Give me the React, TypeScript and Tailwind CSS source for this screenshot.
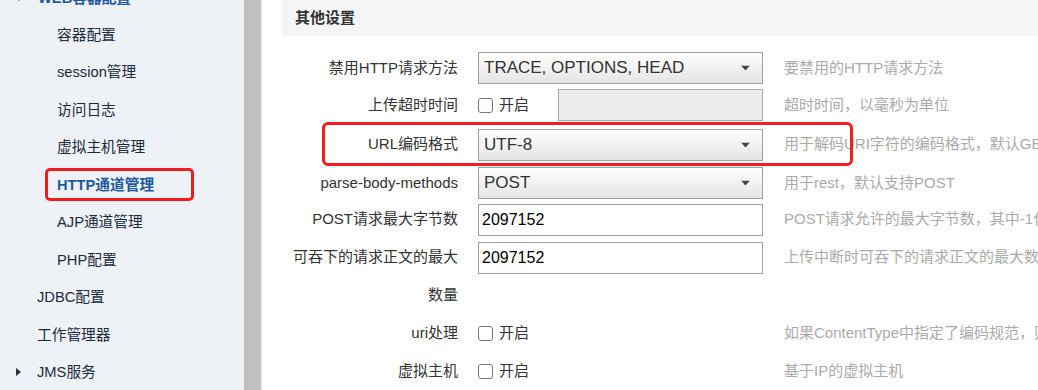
const FONT = { fontFamily: '"Liberation Sans", Arial, "Noto Sans CJK SC", sans-serif' };

type Row = {
  label: string;
  help: string;
  kind: 'select' | 'input' | 'check' | 'checkInput';
  value?: string;
  h: string;
  tall?: boolean;
};

const rows: Row[] = [
  { label: '禁用HTTP请求方法', kind: 'select', value: 'TRACE, OPTIONS, HEAD', help: '要禁用的HTTP请求方法', h: 'h-[36px]' },
  { label: '上传超时时间', kind: 'checkInput', help: '超时时间，以毫秒为单位', h: 'h-[38px]' },
  { label: 'URL编码格式', kind: 'select', value: 'UTF-8', help: '用于解码URI字符的编码格式，默认GBK', h: 'h-[41px]' },
  { label: 'parse-body-methods', kind: 'select', value: 'POST', help: '用于rest，默认支持POST', h: 'h-[36px]' },
  { label: 'POST请求最大字节数', kind: 'input', value: '2097152', help: 'POST请求允许的最大字节数，其中-1代表不限制', h: 'h-[37px]' },
  { label: '可吞下的请求正文的最大数量', kind: 'input', value: '2097152', help: '上传中断时可吞下的请求正文的最大数量', h: 'h-[76px]', tall: true },
  { label: 'uri处理', kind: 'check', help: '如果ContentType中指定了编码规范，则使用该编码', h: 'h-[38px]' },
  { label: '虚拟主机', kind: 'check', help: '基于IP的虚拟主机', h: 'h-[39px]' },
];

function Caret() {
  return (
    <svg width="9" height="5" viewBox="0 0 9 5" className="absolute right-[12px] top-1/2 -translate-y-1/2">
      <path d="M0 0h9L4.5 5z" fill="#444" />
    </svg>
  );
}

function SelectBox({ value }: { value: string }) {
  return (
    <div className="relative h-[32px] w-[285px] border border-[#a0a0a0] bg-gradient-to-b from-white to-[#e4e4e4] pl-[5px] text-[17px] leading-[30px] text-[#333]">
      {value}
      <Caret />
    </div>
  );
}

function CheckBox() {
  return (
    <div className="flex items-center">
      <span className="h-[15px] w-[15px] rounded-[3px] border border-[#777] bg-white" />
      <span className="ml-[6px] text-[15px] text-[#333]">开启</span>
    </div>
  );
}

function Control({ row }: { row: Row }) {
  if (row.kind === 'select') return <SelectBox value={row.value ?? ''} />;
  if (row.kind === 'input')
    return (
      <div className="h-[32px] w-[285px] border border-[#a0a0a0] bg-white pl-[3px] text-[16px] leading-[30px] text-black">
        {row.value}
      </div>
    );
  if (row.kind === 'checkInput')
    return (
      <div className="flex w-[285px] items-center">
        <CheckBox />
        <div className="ml-auto h-[32px] w-[205px] border border-[#aaa] bg-[#ebebeb]" />
      </div>
    );
  return (
    <div className="w-[285px]">
      <CheckBox />
    </div>
  );
}

function Sidebar() {
  const sub = ['容器配置', 'session管理', '访问日志', '虚拟主机管理', 'HTTP通道管理', 'AJP通道管理', 'PHP配置'];
  return (
    <div className="relative flex w-[263px] shrink-0">
      <div className="w-[244px] bg-[#eef1f6] text-[14.7px] text-[#1c2b3c]">
        <div className="relative -mt-[19px] flex h-[35px] items-center pl-[38px] font-bold text-[#1e5aa0]">
          <svg width="8" height="5" viewBox="0 0 8 5" className="absolute left-[15px] top-[15px]">
            <path d="M0 0h8L4 5z" fill="#2a3440" />
          </svg>
          WEB容器配置
        </div>
        {sub.map((s) => (
          <div key={s} className="flex h-[37.5px] items-center pl-[57px]">
            {s === 'HTTP通道管理' ? (
              <span className="-ml-[12px] flex h-[33px] w-[149px] items-center rounded-[5px] border-[3px] border-[#f01c1c] pl-[9px] font-bold text-[#1e5aa0]">
                {s}
              </span>
            ) : (
              s
            )}
          </div>
        ))}
        <div className="flex h-[37.5px] items-center pl-[37px]">JDBC配置</div>
        <div className="flex h-[37.5px] items-center pl-[37px]">工作管理器</div>
        <div className="relative flex h-[37.5px] items-center pl-[37px]">
          <svg width="5" height="8" viewBox="0 0 5 8" className="absolute left-[16px] top-1/2 -translate-y-1/2">
            <path d="M0 0l5 4-5 4z" fill="#2a3440" />
          </svg>
          JMS服务
        </div>
      </div>
      <div className="w-[17px] bg-[#c1c1c1]" />
      <div className="w-[2px] bg-[#f0f0f0]" />
    </div>
  );
}

export default function App() {
  return (
    <div className="flex h-[390px] w-[1038px] overflow-hidden bg-white" style={FONT}>
      <Sidebar />
      <div className="min-w-0 flex-1 pl-[19px]">
        <div className="flex h-[36px] items-center bg-[#f4f5f7] pl-[13px] text-[15px] font-bold text-[#333]">
          其他设置
        </div>
        <div className="pt-[14px]">
          {rows.map((row) => (
            <div
              key={row.label}
              className={`relative flex ${row.h} ${row.tall ? 'items-start' : 'items-center'}`}
            >
              {row.label === 'URL编码格式' && (
                <div className="pointer-events-none absolute -top-[2px] left-[40px] h-[44px] w-[531px] rounded-[6px] border-[3px] border-[#f21d1d]" />
              )}
              <div
                className={`w-[176px] shrink-0 text-right text-[15px] text-[#333] ${row.tall ? 'pl-[8px] leading-[38px]' : ''}`}
              >
                {row.label}
              </div>
              <div className={`ml-[20px] shrink-0 ${row.tall ? 'pt-[4px]' : ''}`}>
                <Control row={row} />
              </div>
              <div
                className={`ml-[21px] whitespace-nowrap text-[15px] text-[#aaa] ${row.tall ? 'leading-[38px]' : ''}`}
              >
                {row.help}
              </div>
            </div>
          ))}
        </div>
      </div>
    </div>
  );
}
